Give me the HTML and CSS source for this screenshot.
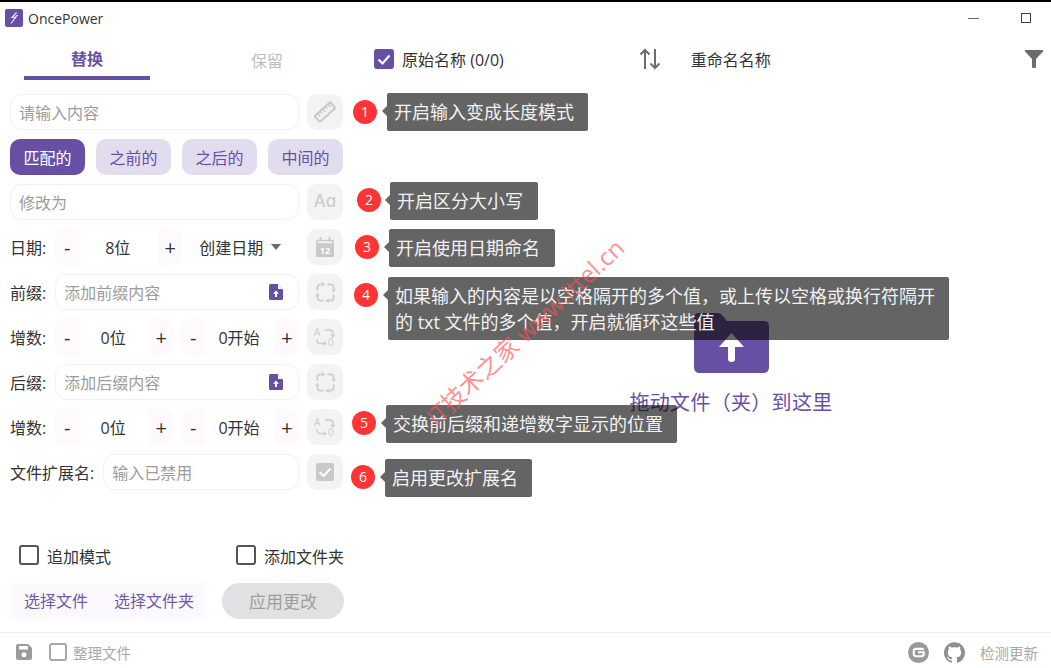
FILE: index.html
```html
<!DOCTYPE html>
<html lang="zh-CN">
<head>
    <meta charset="UTF-8">
    <title>OncePower</title>
    <link rel="stylesheet" href="styles.css">
</head>
<body>
<svg class="defs" width="0" height="0">
    <symbol id="i-loop" viewBox="0 0 24 24">
        <path d="M3.500 10V7Q3.500 3.500 7 3.500H9M14 3.500H17Q20.500 3.500 20.500 7V9M20.500 14V17Q20.500 20.500 17 20.500H15M10 20.500H7Q3.500 20.500 3.500 17V15" fill="none" stroke="currentColor" stroke-width="2"/>
        <path d="M8.500 1V6L12 3.500Z M18 8.500H23L20.500 12Z M15.500 18V23L12 20.500Z M1 15.500H6L3.500 12Z" fill="currentColor"/>
    </symbol>
    <symbol id="i-fileup" viewBox="0 0 14 16">
        <path d="M1.500 0H8.500L14 5.500V14.500Q14 16 12.500 16H1.500Q0 16 0 14.500V1.500Q0 0 1.500 0Z" fill="#6750a4"/>
        <path d="M9 .5L13.500 5H9Z" fill="#fff"/>
        <path d="M7 6.500L10 9.800H8V13H6V9.800H4Z" fill="#fff"/>
    </symbol>
    <defs>
        <g id="i-swap-arrows">
            <path d="M12 3.500H18Q20.500 3.500 20.500 6V9.500M3.500 13.500V15.500Q3.500 18 6 18H11" fill="none" stroke="currentColor" stroke-width="1.700"/>
            <path d="M17.500 8.500H23.500L20.500 12Z M10.500 15V21L14 18Z" fill="currentColor"/>
        </g>
    </defs>
</svg>

<div class="app">
    <header class="titlebar">
        <div class="brand">
            <svg class="logo" viewBox="0 0 18 18" width="18" height="18">
                <rect width="18" height="18" rx="2" fill="#6750a4"/>
                <path d="M11.500 3.500L7 8.500H10.500L6 14.500M12.500 6L9.500 9" fill="none" stroke="#e8e2f5" stroke-width="1.200"/>
            </svg>
            <span>OncePower</span>
        </div>
        <div class="window-btns">
            <span class="win-min"></span>
            <span class="win-max"></span>
        </div>
    </header>

    <main class="main">
        <section class="left">
            <nav class="tabs">
                <div class="tab active">替换</div>
                <div class="tab">保留</div>
            </nav>

            <div class="form">
                <div class="row">
                    <div class="field grow"><span class="hint">请输入内容</span></div>
                    <div class="icon-btn">
                        <svg viewBox="0 0 24 24" width="24" height="24">
                            <g transform="rotate(-42 12 12)">
                                <rect x="1.500" y="8" width="21" height="8" rx="1" fill="none" stroke="#c9c9c9" stroke-width="2"/>
                                <path d="M5.500 8V12M9 8V11M12.500 8V12M16 8V11M19.500 8V12" stroke="#c9c9c9" stroke-width="1.500"/>
                            </g>
                        </svg>
                    </div>
                </div>

                <div class="row seg-row">
                    <div class="seg active">匹配的</div>
                    <div class="seg">之前的</div>
                    <div class="seg">之后的</div>
                    <div class="seg">中间的</div>
                </div>

                <div class="row">
                    <div class="field grow"><span class="hint">修改为</span></div>
                    <div class="icon-btn case-icon">Aɑ</div>
                </div>

                <div class="row">
                    <label class="lbl">日期:</label>
                    <div class="counter date-counter">
                        <span class="step">-</span><span class="val">8位</span><span class="step">+</span>
                    </div>
                    <div class="select grow"><span>创建日期</span><i class="caret"></i></div>
                    <div class="icon-btn">
                        <svg viewBox="0 0 18 20" width="18" height="20">
                            <path d="M1 3.500H17V7H1Z" fill="none" stroke="#c9c9c9" stroke-width="1.600"/>
                            <rect x="0" y="7" width="18" height="13" rx="1" fill="#c9c9c9"/>
                            <rect x="3.500" y="0" width="2" height="4.500" fill="#c9c9c9"/>
                            <rect x="12.500" y="0" width="2" height="4.500" fill="#c9c9c9"/>
                            <text x="9" y="17" class="cal-text">12</text>
                        </svg>
                    </div>
                </div>

                <div class="row">
                    <label class="lbl">前缀:</label>
                    <div class="field grow">
                        <span class="hint">添加前缀内容</span>
                        <svg class="file-up" width="14" height="16"><use href="#i-fileup"/></svg>
                    </div>
                    <div class="icon-btn"><svg width="23" height="23"><use href="#i-loop"/></svg></div>
                </div>

                <div class="row">
                    <label class="lbl">增数:</label>
                    <div class="counter grow">
                        <span class="step">-</span><span class="val">0位</span><span class="step">+</span>
                    </div>
                    <div class="counter grow">
                        <span class="step">-</span><span class="val">0开始</span><span class="step">+</span>
                    </div>
                    <div class="icon-btn">
                        <svg viewBox="0 -3 24 28" width="22" height="26">
                            <use href="#i-swap-arrows"/>
                            <text x="0" y="10" class="swap-text">A</text>
                            <text x="15" y="21" class="swap-text">0</text>
                        </svg>
                    </div>
                </div>

                <div class="row">
                    <label class="lbl">后缀:</label>
                    <div class="field grow">
                        <span class="hint">添加后缀内容</span>
                        <svg class="file-up" width="14" height="16"><use href="#i-fileup"/></svg>
                    </div>
                    <div class="icon-btn"><svg width="23" height="23"><use href="#i-loop"/></svg></div>
                </div>

                <div class="row">
                    <label class="lbl">增数:</label>
                    <div class="counter grow">
                        <span class="step">-</span><span class="val">0位</span><span class="step">+</span>
                    </div>
                    <div class="counter grow">
                        <span class="step">-</span><span class="val">0开始</span><span class="step">+</span>
                    </div>
                    <div class="icon-btn">
                        <svg viewBox="0 -3 24 28" width="22" height="26">
                            <use href="#i-swap-arrows"/>
                            <text x="0" y="10" class="swap-text">A</text>
                            <text x="15" y="21" class="swap-text">0</text>
                        </svg>
                    </div>
                </div>

                <div class="row">
                    <label class="lbl">文件扩展名:</label>
                    <div class="field grow"><span class="hint">输入已禁用</span></div>
                    <div class="icon-btn">
                        <svg viewBox="0 0 18 18" width="18" height="18">
                            <rect width="18" height="18" rx="2" fill="#c9c9c9"/>
                            <path d="M3.500 9L7.500 13L14.500 5.500" fill="none" stroke="#fff" stroke-width="2"/>
                        </svg>
                    </div>
                </div>
            </div>

            <div class="bottom">
                <div class="check-row">
                    <div class="check"><i class="box"></i><span>追加模式</span></div>
                    <div class="check"><i class="box"></i><span>添加文件夹</span></div>
                </div>
                <div class="action-row">
                    <div class="pick">
                        <span>选择文件</span>
                        <span>选择文件夹</span>
                    </div>
                    <div class="apply">应用更改</div>
                </div>
            </div>
        </section>

        <section class="right">
            <div class="list-head">
                <i class="box checked">
                    <svg viewBox="0 0 20 20" width="20" height="20"><path d="M4.500 10.500L8.500 14.500L15.500 6.500" fill="none" stroke="#fff" stroke-width="2.200"/></svg>
                </i>
                <span class="col-name">原始名称 (0/0)</span>
                <svg class="sort" viewBox="0 0 22 22" width="22" height="22">
                    <path d="M6 21V2M1.500 6.500L6 2L10.500 6.500M16 1V20M11.500 15.500L16 20L20.500 15.500" fill="none" stroke="#6b6b6b" stroke-width="2"/>
                </svg>
                <span class="col-new">重命名名称</span>
                <svg class="filter" viewBox="0 0 18 18" width="18" height="18">
                    <path d="M0 0H18V1.500L11 9V17Q11 18 10 18H8Q7 18 7 17V9L0 1.500Z" fill="#6b6b6b"/>
                </svg>
            </div>
            <div class="drop">
                <svg viewBox="0 0 75 60" width="75" height="60">
                    <path d="M5 0H24Q27 0 29 3L33 8H70Q75 8 75 13V54Q75 60 69 60H6Q0 60 0 54V5Q0 0 5 0Z" fill="#6750a4"/>
                    <path d="M37.500 20L50 34H41V46Q41 49 37.500 49Q34 49 34 46V34H25Z" fill="#fff"/>
                </svg>
                <p>拖动文件（夹）到这里</p>
            </div>
        </section>
    </main>

    <footer class="footer">
        <div class="foot-left">
            <svg viewBox="0 0 16 16" width="16" height="16">
                <path d="M2 0H12L16 4V14Q16 16 14 16H2Q0 16 0 14V2Q0 0 2 0Z" fill="#9a9a9a"/>
                <rect x="3" y="2" width="9" height="3.500" fill="#fff"/>
                <circle cx="8" cy="10.800" r="2.500" fill="#fff"/>
            </svg>
            <div class="check small-check"><i class="box"></i>整理文件</div>
        </div>
        <div class="foot-right">
            <svg viewBox="0 0 20 20" width="21" height="21">
                <circle cx="10" cy="10" r="10" fill="#9a9a9a"/>
                <path d="M15 6.500H7.500Q5.500 6.500 5.500 8.500V11.500Q5.500 13.500 7.500 13.500H13Q15 13.500 15 11.500V9.800H9.500" fill="none" stroke="#fff" stroke-width="2"/>
            </svg>
            <svg class="gh" viewBox="0 0 24 24" width="21" height="21">
                <path fill="#8f8f8f" d="M12 .297c-6.630 0-12 5.373-12 12 0 5.303 3.438 9.800 8.205 11.385.600.113.820-.258.820-.577 0-.285-.010-1.040-.015-2.040-3.338.724-4.042-1.610-4.042-1.610C4.422 18.070 3.633 17.700 3.633 17.700c-1.087-.744.084-.729.084-.729 1.205.084 1.838 1.236 1.838 1.236 1.070 1.835 2.809 1.305 3.495.998.108-.776.417-1.305.760-1.605-2.665-.300-5.466-1.332-5.466-5.930 0-1.310.465-2.380 1.235-3.220-.135-.303-.540-1.523.105-3.176 0 0 1.005-.322 3.300 1.230.960-.267 1.980-.399 3-.405 1.020.006 2.040.138 3 .405 2.280-1.552 3.285-1.230 3.285-1.230.645 1.653.240 2.873.120 3.176.765.840 1.230 1.910 1.230 3.220 0 4.610-2.805 5.625-5.475 5.920.420.360.810 1.096.810 2.220 0 1.606-.015 2.896-.015 3.286 0 .315.210.690.825.570C20.565 22.092 24 17.592 24 12.297c0-6.627-5.373-12-12-12"/>
            </svg>
            <span class="update">检测更新</span>
        </div>
    </footer>

    <!-- annotations drawn over the app -->
    <div class="badge b1">1</div>
    <div class="tip t1">开启输入变成长度模式</div>
    <div class="badge b2">2</div>
    <div class="tip t2">开启区分大小写</div>
    <div class="badge b3">3</div>
    <div class="tip t3">开启使用日期命名</div>
    <div class="badge b4">4</div>
    <div class="tip t4">如果输入的内容是以空格隔开的多个值，或上传以空格或换行符隔开的 txt 文件的多个值，开启就循环这些值</div>
    <div class="badge b5">5</div>
    <div class="tip t5">交换前后缀和递增数字显示的位置</div>
    <div class="badge b6">6</div>
    <div class="tip t6">启用更改扩展名</div>

    <div class="watermark">IT技术之家 www.ittel.cn</div>
</div>
</body>
</html>
```

FILE: styles.css
```css
* {
    box-sizing: border-box;
}

body {
    margin: 0;
    background-color: #fff;
    color: #333;
    font-family: "Open Sans", "Noto Sans CJK SC", sans-serif;
    font-size: 16px;
}

.defs {
    position: absolute;
}

.app {
    position: relative;
    width: 1051px;
    height: 668px;
    border-top: 2px solid #000;
    display: flex;
    flex-direction: column;
    overflow: hidden;
}

/* Title bar */
.titlebar {
    height: 32px;
    flex: none;
    display: flex;
    justify-content: space-between;
    align-items: center;
    padding: 0 20px 0 5px;
}

.brand {
    display: flex;
    align-items: center;
    gap: 5px;
    font-size: 14px;
    color: #333;
}

.window-btns {
    display: flex;
    align-items: center;
    gap: 42px;
}

.win-min {
    width: 11px;
    height: 1px;
    background-color: #666;
}

.win-max {
    width: 10px;
    height: 10px;
    border: 1px solid #444;
}

/* Layout */
.main {
    flex: 1;
    display: flex;
    min-height: 0;
}

.left {
    width: 350px;
    flex: none;
    display: flex;
    flex-direction: column;
    padding: 0 7px 13px 10px;
}

.right {
    flex: 1;
    padding-left: 24px;
}

/* Tabs */
.tabs {
    display: flex;
    gap: 54px;
    height: 46px;
    margin: 0 0 14px 14px;
}

.tab {
    width: 126px;
    text-align: center;
    padding-top: 14px;
    color: #bdbdbd;
}

.tab.active {
    padding-top: 12px;
    height: 46px;
    color: #6750a4;
    font-weight: 700;
    border-bottom: 4px solid #6750a4;
}

/* Form rows */
.form {
    display: flex;
    flex-direction: column;
    gap: 9px;
}

.row {
    height: 36px;
    display: flex;
    align-items: center;
    gap: 8px;
}

.seg-row {
    gap: 11px;
}

.grow {
    flex: 1;
    min-width: 0;
}

.lbl {
    white-space: nowrap;
    margin-right: 1px;
}

.field {
    height: 36px;
    display: flex;
    align-items: center;
    justify-content: space-between;
    padding: 0 15px 0 8px;
    background-color: #fff;
    border: 1px solid #f3f1f5;
    border-radius: 12px;
    box-shadow: 0 0 2px rgba(0, 0, 0, 0.03);
}

.hint {
    color: #9c9c9c;
}

.file-up {
    flex: none;
}

.icon-btn {
    width: 36px;
    height: 36px;
    flex: none;
    display: flex;
    align-items: center;
    justify-content: center;
    border-radius: 10px;
    background-color: #f4f3f4;
    color: #cfcfcf;
}

.case-icon {
    padding-bottom: 2px;
    font-family: "Inter", sans-serif;
    font-size: 17px;
    font-weight: 500;
    color: #cdcdcd;
}

.swap-text {
    font-size: 11px;
    fill: #cdcdcd;
}

.cal-text {
    font-size: 9px;
    font-weight: 700;
    fill: #fff;
    text-anchor: middle;
}

.seg {
    width: 75px;
    height: 36px;
    display: flex;
    align-items: center;
    justify-content: center;
    border-radius: 10px;
    background-color: #e2dcef;
    color: #6750a4;
}

.seg.active {
    background-color: #6750a4;
    color: #fff;
}

/* Counters */
.counter {
    height: 36px;
    display: flex;
    align-items: center;
    border-radius: 10px;
    overflow: hidden;
    box-shadow: 0 0 2px rgba(0, 0, 0, 0.04);
}

.date-counter {
    width: 127px;
    flex: none;
}

.step {
    width: 24px;
    height: 36px;
    flex: none;
    display: flex;
    align-items: center;
    justify-content: center;
    background-color: #fdf9fd;
    font-size: 20px;
}

.val {
    flex: 1;
    text-align: center;
    padding-right: 2px;
}

.select {
    display: flex;
    align-items: center;
    gap: 8px;
    padding-left: 9px;
}

.caret {
    width: 0;
    height: 0;
    border-left: 5.500px solid transparent;
    border-right: 5.500px solid transparent;
    border-top: 6px solid #6b6b6b;
}

/* Bottom actions */
.bottom {
    margin-top: auto;
}

.check-row {
    height: 36px;
    display: flex;
    align-items: center;
    padding-left: 9px;
    gap: 125px;
    margin-bottom: 10px;
}

.check {
    display: flex;
    align-items: center;
    gap: 8px;
    white-space: nowrap;
}

.check-row .check span {
    padding-top: 2px;
}

.box {
    width: 20px;
    height: 20px;
    flex: none;
    border: 2px solid #555;
    border-radius: 3px;
    display: block;
}

.box.checked {
    border: none;
    background-color: #6750a4;
}

.action-row {
    display: flex;
    gap: 16px;
}

.pick {
    width: 196px;
    height: 36px;
    flex: none;
    display: flex;
    align-items: center;
    gap: 26px;
    padding: 0 0 2px 14px;
    background-color: #fcf9fe;
    color: #6f5aa8;
}

.apply {
    width: 122px;
    height: 36px;
    flex: none;
    display: flex;
    align-items: center;
    justify-content: center;
    padding-bottom: 2px;
    border-radius: 18px;
    background-color: #e1e1e3;
    color: #9e9e9e;
    font-size: 17px;
}

/* Right list */
.list-head {
    height: 50px;
    display: flex;
    align-items: center;
    padding-right: 8px;
}

.col-name {
    margin-left: 8px;
}

.sort {
    margin-left: 135px;
}

.col-new {
    margin-left: 30px;
    flex: 1;
}

.filter {
    flex: none;
}

.drop {
    width: 626px;
    margin: 229px 0 0 44px;
    display: flex;
    flex-direction: column;
    align-items: center;
    color: #6750a4;
}

.drop p {
    margin: 15px 0 0;
    font-size: 20px;
    line-height: 30px;
    letter-spacing: 0.3px;
}

/* Footer */
.footer {
    height: 36px;
    flex: none;
    display: flex;
    justify-content: space-between;
    align-items: center;
    padding: 3px 13px 0 16px;
    border-top: 1px solid #eee;
    font-size: 14.500px;
    color: #a8a8a8;
}

.foot-left,
.foot-right {
    display: flex;
    align-items: center;
}

.foot-left {
    gap: 17px;
}

.foot-right {
    gap: 15px;
}

.small-check {
    gap: 6px;
}

.small-check .box {
    width: 18px;
    height: 18px;
    border-color: #a8a8a8;
}

/* Annotations */
.badge {
    position: absolute;
    width: 24px;
    height: 24px;
    border-radius: 50%;
    background-color: #ff3535;
    color: #fff;
    font-size: 14px;
    line-height: 24px;
    text-align: center;
}

.tip {
    position: absolute;
    padding: 0 7px;
    height: 38px;
    line-height: 38px;
    border-radius: 2px;
    background-color: rgba(10, 10, 10, 0.63);
    color: #f2f2f2;
    font-size: 18px;
}

.tip::before {
    content: "";
    position: absolute;
    left: -5px;
    top: 13px;
    border-top: 5px solid transparent;
    border-bottom: 5px solid transparent;
    border-right: 5px solid #666;
}

.b1 { left: 353px; top: 98px; }
.t1 { left: 387px; top: 91px; width: 201px; }
.b2 { left: 357px; top: 186px; }
.t2 { left: 390px; top: 180px; width: 148px; }
.b3 { left: 355px; top: 233px; }
.t3 { left: 389px; top: 227px; width: 166px; }
.b4 { left: 354px; top: 281px; }
.t4 { left: 388px; top: 275px; width: 561px; height: 63px; line-height: 26px; padding-top: 6px; }
.b5 { left: 352px; top: 409px; }
.t5 { left: 386px; top: 403px; width: 291px; }
.b6 { left: 351px; top: 463px; }
.t6 { left: 385px; top: 457px; width: 147px; }

.watermark {
    position: absolute;
    left: 380px;
    top: 316px;
    width: 290px;
    text-align: center;
    white-space: nowrap;
    transform: rotate(-43deg);
    font-size: 24px;
    line-height: 28px;
    color: rgba(255, 80, 80, 0.65);
}
```
